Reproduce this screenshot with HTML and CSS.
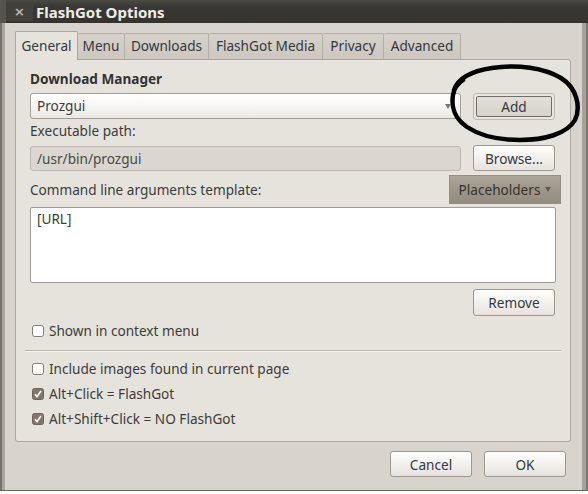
FILE: index.html
```html
<!DOCTYPE html>
<html>
<head>
<meta charset="utf-8">
<title>FlashGot Options</title>
<link rel="stylesheet" href="styles.css">
</head>
<body>
<div class="window">
  <div class="titlebar">
    <div class="close">×</div>
    <div class="title">FlashGot Options</div>
  </div>
  <div class="dialog">
    <div class="tabs">
      <div class="tab active t-general">General</div>
      <div class="tab t-menu">Menu</div>
      <div class="tab t-downloads">Downloads</div>
      <div class="tab t-media">FlashGot Media</div>
      <div class="tab t-privacy">Privacy</div>
      <div class="tab t-advanced">Advanced</div>
    </div>
    <div class="page">
      <div class="heading">Download Manager</div>
      <div class="row row-combo">
        <div class="combo"><span>Prozgui</span><span class="arrow"></span></div>
        <div class="btn-default"><div class="btn-inner">Add</div></div>
      </div>
      <div class="label label-exe">Executable path:</div>
      <div class="row row-entry">
        <div class="entry">/usr/bin/prozgui</div>
        <div class="btn btn-browse">Browse...</div>
      </div>
      <div class="row row-args">
        <div class="label grow">Command line arguments template:</div>
        <div class="placeholders">Placeholders<span class="arrow dark"></span></div>
      </div>
      <div class="textarea">[URL]</div>
      <div class="btn btn-remove">Remove</div>
      <div class="check check-context">
        <svg class="box" width="12" height="12" viewBox="0 0 12 12"><rect x="0.5" y="0.5" width="11" height="11" rx="2" fill="#fff" stroke="#857f77"/></svg>
        <span>Shown in context menu</span>
      </div>
      <div class="separator"></div>
      <div class="check check-first">
        <svg class="box" width="12" height="12" viewBox="0 0 12 12"><rect x="0.5" y="0.5" width="11" height="11" rx="2" fill="#fff" stroke="#857f77"/></svg>
        <span>Include images found in current page</span>
      </div>
      <div class="check check-next">
        <svg class="box" width="12" height="12" viewBox="0 0 12 12"><rect x="0.5" y="0.5" width="11" height="11" rx="2" fill="#837569" stroke="#6e645a"/><path d="M3 6.2 L5 8.6 L9 3" fill="none" stroke="#fff" stroke-width="1.6"/></svg>
        <span>Alt+Click = FlashGot</span>
      </div>
      <div class="check check-next">
        <svg class="box" width="12" height="12" viewBox="0 0 12 12"><rect x="0.5" y="0.5" width="11" height="11" rx="2" fill="#837569" stroke="#6e645a"/><path d="M3 6.2 L5 8.6 L9 3" fill="none" stroke="#fff" stroke-width="1.6"/></svg>
        <span>Alt+Shift+Click = NO FlashGot</span>
      </div>
    </div>
    <div class="actions">
      <div class="btn btn-action">Cancel</div>
      <div class="btn btn-action">OK</div>
    </div>
  </div>
  <svg class="scribble" width="134" height="84" viewBox="0 0 134 84">
    <path d="M6,28 C10,16 24,9 44,6 C70,2 96,6 113,16 C129,26 133,45 127,58 C119,72 96,78 72,78 C50,78 31,73 19,65 C7,57 3,45 5,33 C6,27 9,22 15,18" fill="none" stroke="#000" stroke-width="4.5" stroke-linecap="round"/>
  </svg>
</div>
</body>
</html>
```
FILE: styles.css
```css
body {
  margin: 0;
  background: #ffffff;
  font-family: "Noto Sans", "DejaVu Sans", sans-serif;
  font-size: 13.6px;
  color: #3c3c3c;
}

.window {
  position: relative;
  width: 588px;
  height: 491px;
  box-sizing: border-box;
  background: #d8d4cd;
  border-bottom: 1px solid #6a665f;
  display: flex;
  flex-direction: column;
  box-shadow: inset 2px 0 #77736c, inset 5px 0 #aba79f, inset -2px 0 #7d7870, inset -6px 0 #a6a199;
}

.titlebar {
  height: 23px;
  flex: none;
  display: flex;
  align-items: center;
  background: linear-gradient(#4a4943, #393834 30%, #34332f);
  box-shadow: inset 6px 0 #55534e;
}

.close {
  width: 27px;
  height: 19px;
  margin-left: 6px;
  background: #42413c;
  color: #bcb8b0;
  font-size: 13px;
  font-weight: bold;
  line-height: 19px;
  text-align: center;
  font-family: "DejaVu Sans", sans-serif;
}

.title {
  margin-left: 3px;
  color: #f0ece4;
  font-weight: bold;
  font-size: 15px;
  line-height: 18px;
}

.dialog {
  flex: 1;
  display: flex;
  flex-direction: column;
  padding: 8px 17px 0 15px;
}

.tabs {
  display: flex;
  align-items: flex-end;
  height: 28px;
  position: relative;
  z-index: 1;
}

.tab {
  box-sizing: border-box;
  height: 26px;
  padding-top: 4px;
  line-height: 16px;
  text-align: center;
  color: #323a42;
  background: linear-gradient(#d6d1c9, #ccc7bf);
  border-top: 1px solid #b3aea6;
  border-right: 1px solid #b3aea6;
  border-radius: 2px 2px 0 0;
}

.tab.active {
  height: 29px;
  margin-bottom: -1px;
  padding-top: 6px;
  background: #e6e3dd;
  border: 1px solid #aca79f;
  border-bottom: none;
}

.t-general { width: 63px; }
.t-menu { width: 47px; }
.t-downloads { width: 84px; }
.t-media { width: 114px; }
.t-privacy { width: 61px; }
.t-advanced { width: 77px; }

.page {
  width: 556px;
  height: 383px;
  box-sizing: border-box;
  background: #e6e3dd;
  border: 1px solid #aca79f;
  border-radius: 0 3px 3px 3px;
  padding: 11px 14px 0 14px;
  display: flex;
  flex-direction: column;
}

.heading {
  font-weight: bold;
  line-height: 16px;
  color: #333;
}

.label {
  line-height: 16px;
}

.grow { flex: 1; }

.row {
  display: flex;
}

.row-combo {
  margin-top: 6px;
  align-items: flex-start;
}

.combo {
  width: 431px;
  height: 26px;
  box-sizing: border-box;
  border: 1px solid #a39e96;
  border-radius: 3px;
  background: linear-gradient(#ffffff, #f7f6f4 50%, #ebe8e4);
  display: flex;
  align-items: center;
  justify-content: space-between;
  padding: 0 9px 0 6px;
  line-height: 16px;
}

.arrow {
  width: 0;
  height: 0;
  border-left: 3px solid transparent;
  border-right: 3px solid transparent;
  border-top: 5px solid #7d7871;
}

.arrow.dark {
  border-top-color: #5f5a52;
  margin-left: 5px;
}

.btn-default {
  margin-left: 12px;
  width: 82px;
  height: 27px;
  box-sizing: border-box;
  border: 1px solid #bdb8b0;
  border-radius: 3px;
  padding: 2px;
  background: #e9e6e1;
}

.btn-inner {
  height: 100%;
  box-sizing: border-box;
  border: 1px solid #726e67;
  border-radius: 2px;
  background: linear-gradient(#e2dfda, #d6d2cc);
  display: flex;
  align-items: center;
  justify-content: center;
  color: #323a42;
}

.label-exe {
  margin-top: 3px;
}

.row-entry {
  margin-top: 6px;
  align-items: flex-end;
}

.entry {
  width: 431px;
  height: 25px;
  box-sizing: border-box;
  border: 1px solid #bcb7af;
  border-radius: 3px;
  background: #dbd7d0;
  padding-left: 6px;
  line-height: 23px;
  color: #4a4844;
}

.btn {
  box-sizing: border-box;
  width: 82px;
  height: 26px;
  border: 1px solid #9e9890;
  border-radius: 3px;
  background: linear-gradient(#fefefd, #f3f1ee 50%, #e6e3de);
  display: flex;
  align-items: center;
  justify-content: center;
  color: #323a42;
}

.btn-browse {
  margin-left: 12px;
}

.row-args {
  margin-top: 4px;
  align-items: center;
  margin-right: -5px;
}

.placeholders {
  width: 112px;
  height: 29px;
  box-sizing: border-box;
  background: linear-gradient(#aca699, #9d978b 50%, #938d81);
  border: 1px solid #948e83;
  display: flex;
  align-items: center;
  justify-content: center;
  color: #36332e;
}

.textarea {
  margin-top: 3px;
  width: 526px;
  height: 76px;
  box-sizing: border-box;
  background: #ffffff;
  border: 1px solid #a19b93;
  border-radius: 2px;
  padding: 3px 6px;
  line-height: 16px;
}

.btn-remove {
  margin-top: 6px;
  margin-left: 443px;
  height: 27px;
}

.check {
  display: flex;
  align-items: center;
  height: 16px;
  line-height: 16px;
  padding-left: 2px;
}

.check .box {
  flex: none;
  margin-right: 5px;
}

.check-context { margin-top: 7px; }

.separator {
  margin: 11px -5px 0 -5px;
  height: 1px;
  background: #bbb6ae;
  border-bottom: 1px solid #f4f2ef;
}

.check-first { margin-top: 9px; }
.check-next { margin-top: 9px; }

.actions {
  display: flex;
  justify-content: flex-end;
  gap: 12px;
  margin-top: 9px;
  margin-right: 5px;
}

.scribble {
  position: absolute;
  left: 448px;
  top: 62px;
}
```
